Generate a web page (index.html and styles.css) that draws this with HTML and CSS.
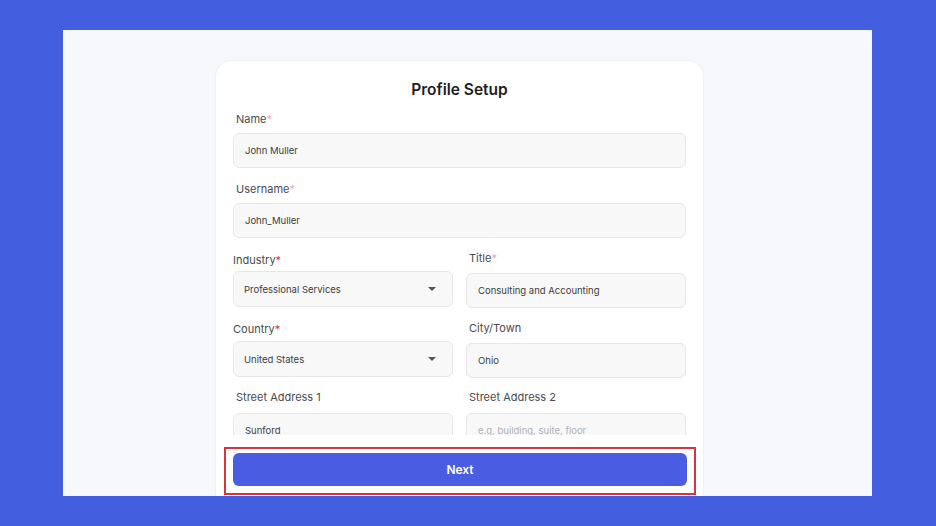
FILE: index.html
```html
<!DOCTYPE html>
<html lang="en">
<head>
  <meta charset="UTF-8" />
  <meta name="viewport" content="width=device-width, initial-scale=1.0"/>
  <title>Profile Setup</title>
  <link rel="stylesheet" href="styles.css">
</head>
<body>
  <div class="panel">
    <div class="card">
      <div class="card-body">
        <h1>Profile Setup</h1>

        <div class="field field-name">
          <label>Name<span class="req">*</span></label>
          <div class="input">John Muller</div>
        </div>

        <div class="field field-user">
          <label>Username<span class="req">*</span></label>
          <div class="input">John_Muller</div>
        </div>

        <div class="row row-industry">
          <div class="field drop">
            <label>Industry<span class="req strong">*</span></label>
            <div class="input select">Professional Services <span class="caret"></span></div>
          </div>
          <div class="field">
            <label>Title<span class="req">*</span></label>
            <div class="input">Consulting and Accounting</div>
          </div>
        </div>

        <div class="row row-country">
          <div class="field drop">
            <label>Country<span class="req strong">*</span></label>
            <div class="input select">United States <span class="caret"></span></div>
          </div>
          <div class="field">
            <label>City/Town</label>
            <div class="input">Ohio</div>
          </div>
        </div>

        <div class="row row-street">
          <div class="field">
            <label>Street Address 1</label>
            <div class="input">Sunford</div>
          </div>
          <div class="field">
            <label>Street Address 2</label>
            <div class="input placeholder">e.g, building, suite, floor</div>
          </div>
        </div>
      </div>

      <div class="card-footer">
        <div class="highlight">
          <button type="button">Next</button>
        </div>
      </div>
    </div>
  </div>
</body>
</html>
```

FILE: styles.css
```css
body {
  font-family: Inter, "Noto Sans", sans-serif;
  margin: 0;
  padding: 30px 64px 30px 63px;
  background-color: #445ee0;
}
.panel {
  height: 466px;
  background-color: #f7f8fc;
  overflow: hidden;
  padding: 30px 0 0 152px;
  box-sizing: border-box;
}
.card {
  width: 489px;
  height: 450px;
  background-color: #fff;
  border: 1px solid #eff0f4;
  border-radius: 16px;
  box-sizing: border-box;
  display: flex;
  flex-direction: column;
}
.card-body {
  height: 374px;
  flex-shrink: 0;
  box-sizing: border-box;
  overflow: hidden;
  padding: 19px 17px 0 17px;
}
h1 {
  margin: 0;
  font-size: 15.5px;
  line-height: 20px;
  font-weight: 600;
  text-align: center;
  color: #1e1e22;
}
.field {
  display: flex;
  flex-direction: column;
}
.field label {
  font-size: 11px;
  line-height: 14px;
  color: #4a4a4f;
  padding-left: 3px;
  margin-bottom: 7px;
}
.field.drop label {
  padding-left: 0;
}
.req {
  color: #eba7ae;
}
.req.strong {
  color: #d8343d;
}
.input {
  height: 35px;
  box-sizing: border-box;
  background-color: #f8f8f8;
  border: 1px solid #e6e6e8;
  border-radius: 6px;
  padding: 0 11px;
  display: flex;
  align-items: center;
  font-size: 9.5px;
  color: #3c3c40;
}
.input.placeholder {
  color: #b0b0b4;
}
.select {
  justify-content: space-between;
  padding-left: 10px;
  padding-right: 16px;
}
.caret {
  width: 0;
  height: 0;
  border-left: 4px solid transparent;
  border-right: 4px solid transparent;
  border-top: 4px solid #555;
}
.field-name {
  margin-top: 12px;
}
.field-user {
  margin-top: 14px;
}
.row {
  display: grid;
  grid-template-columns: 220px 220px;
  column-gap: 13px;
  align-items: start;
}
.row-industry {
  margin-top: 13px;
}
.row-industry .drop {
  margin-top: 2px;
}
.row-industry .drop label {
  margin-bottom: 4px;
}
.row-industry .drop .input {
  height: 36px;
}
.row-industry .field:last-child label {
  margin-bottom: 8px;
}
.row-country {
  margin-top: 13px;
}
.row-country .drop {
  margin-top: 1px;
}
.row-country .drop label {
  margin-bottom: 5px;
}
.row-country .drop .input {
  height: 36px;
}
.row-country .field:last-child label {
  margin-bottom: 8px;
}
.row-street {
  margin-top: 12px;
}
.row-street label {
  margin-bottom: 9px;
}
.card-footer {
  background-color: #fff;
  padding: 12px 7px 0 8px;
}
.highlight {
  border: 2px solid #d8343d;
  padding: 4px 7px 7px 7px;
}
button {
  display: block;
  width: 100%;
  height: 33px;
  border: none;
  border-radius: 6px;
  background-color: #4a5de2;
  color: #fff;
  font-family: inherit;
  font-size: 12px;
  font-weight: 600;
}
```
